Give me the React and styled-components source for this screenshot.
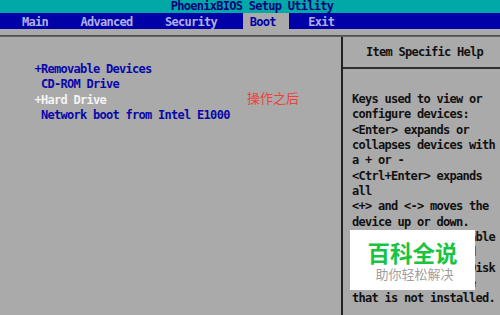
import React from 'react';
import styled, { createGlobalStyle } from 'styled-components';

const GlobalStyle = createGlobalStyle`
    html, body {
        margin: 0;
        padding: 0;
        background: #aaaaaa;
    }
    #root {
        width: 500px;
        height: 315px;
    }
`;

const CELL = 6.5;

const Screen = styled.div`
    position: relative;
    width: 500px;
    height: 315px;
    overflow: hidden;
    display: flex;
    flex-direction: column;
    background: #aaaaaa;
    font-family: "DejaVu Sans Mono", "Liberation Mono", monospace;
    font-size: 12px;
    font-weight: bold;
    letter-spacing: ${CELL - 7.22}px;
`;

const TitleBar = styled.div`
    height: 13px;
    line-height: 13px;
    background: #00a8a8;
    color: #00007a;
    text-align: center;
    padding-left: 4px;
    white-space: pre;
`;

const MenuBar = styled.div`
    height: 16px;
    display: flex;
    align-items: stretch;
    gap: 13px;
    padding-left: 15.5px;
    background: #0000a8;
`;

const MenuItem = styled.div`
    display: flex;
    align-items: center;
    padding: 1px 13px 0 ${CELL}px;
    white-space: pre;
    color: ${p => (p.$active ? '#0000a8' : '#b0b0e8')};
    background: ${p => (p.$active ? '#aaaaaa' : 'transparent')};
`;

const TopRule = styled.div`
    margin-top: 6px;
    height: 2px;
    background: linear-gradient(#4a4a4a, #6a6a6a);
`;

const Body = styled.div`
    flex: 1;
    display: flex;
`;

const MainPane = styled.div`
    width: 343px;
    padding: 25px 0 0 34.5px;
    box-sizing: border-box;
    border-right: 2px solid #222222;
`;

const ListRow = styled.div`
    height: 15.35px;
    line-height: 15.35px;
    white-space: pre;
    color: ${p => (p.$selected ? '#f4f4f4' : '#0808a8')};
`;

const HelpPane = styled.div`
    flex: 1;
    display: flex;
    flex-direction: column;
    color: #111111;
`;

const HelpHeader = styled.div`
    height: 30px;
    line-height: 31px;
    text-align: center;
    padding-left: 6px;
    white-space: pre;
    border-bottom: 2px solid #303030;
`;

const HelpText = styled.div`
    padding: 23px 0 0 9px;
`;

const HelpLine = styled.div`
    height: 15.35px;
    line-height: 15.35px;
    white-space: pre;
`;

const Note = styled.div`
    position: absolute;
    left: 247px;
    top: 88px;
    font-family: "Noto Sans CJK SC", sans-serif;
    font-size: 13px;
    font-weight: normal;
    letter-spacing: 0;
    color: #e8423c;
`;

const Badge = styled.div`
    position: absolute;
    left: 350px;
    top: 230px;
    width: 125px;
    height: 60px;
    background: #ffffff;
    display: flex;
    flex-direction: column;
    align-items: center;
    justify-content: center;
    font-family: "Noto Sans CJK SC", sans-serif;
    letter-spacing: 0;
`;

const BadgeTitle = styled.div`
    font-size: 22.5px;
    line-height: 27px;
    font-weight: bold;
    color: #18c440;
    margin-top: 1px;
`;

const BadgeSub = styled.div`
    font-size: 13px;
    line-height: 16px;
    font-weight: normal;
    color: #a0a0a0;
    margin-left: 4px;
`;

const menu = ['Main', 'Advanced', 'Security', 'Boot', 'Exit'];

const devices = [
    { label: '+Removable Devices' },
    { label: ' CD-ROM Drive' },
    { label: '+Hard Drive', selected: true },
    { label: ' Network boot from Intel E1000' },
];

const help = [
    'Keys used to view or',
    'configure devices:',
    '<Enter> expands or',
    'collapses devices with',
    'a + or -',
    '<Ctrl+Enter> expands',
    'all',
    '<+> and <-> moves the',
    'device up or down.',
    '<n> May move removable',
    'device between Hard',
    'Disk or Removable Disk',
    '<d> Remove a device',
    'that is not installed.',
];

export default function App() {
    return (
        <>
            <GlobalStyle />
            <Screen>
                <TitleBar>PhoenixBIOS Setup Utility</TitleBar>
                <MenuBar>
                    {menu.map(m => (
                        <MenuItem key={m} $active={m === 'Boot'}>{m}</MenuItem>
                    ))}
                </MenuBar>
                <TopRule />
                <Body>
                    <MainPane>
                        {devices.map(d => (
                            <ListRow key={d.label} $selected={d.selected}>{d.label}</ListRow>
                        ))}
                    </MainPane>
                    <HelpPane>
                        <HelpHeader>Item Specific Help</HelpHeader>
                        <HelpText>
                            {help.map((line, i) => (
                                <HelpLine key={i}>{line}</HelpLine>
                            ))}
                        </HelpText>
                    </HelpPane>
                </Body>
                <Note>操作之后</Note>
                <Badge>
                    <BadgeTitle>百科全说</BadgeTitle>
                    <BadgeSub>助你轻松解决</BadgeSub>
                </Badge>
            </Screen>
        </>
    );
}
